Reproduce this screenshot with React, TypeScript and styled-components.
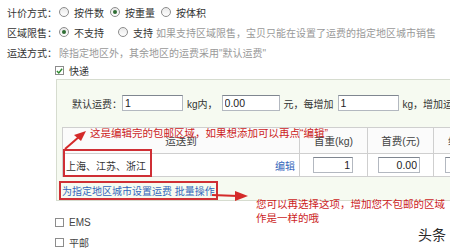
import React from "react";
import styled, { createGlobalStyle } from "styled-components";

const Global = createGlobalStyle`
  html, body { margin: 0; padding: 0; background: #fff; }
  body { overflow: hidden; }
`;

const Page = styled.div`
  position: relative;
  width: 450px;
  height: 251px;
  overflow: hidden;
  background: #fff;
  font-family: "Liberation Sans", "Noto Sans CJK SC", sans-serif;
  font-size: 10px;
  color: #333;
`;

const Form = styled.div`
  padding-top: 2px;
`;

const FormRow = styled.div`
  display: flex;
  align-items: center;
  height: 20px;
  padding-left: 7px;
  white-space: nowrap;
`;

const Label = styled.span`
  color: #333;
  margin-right: 2px;
`;

const Radio = styled.span<{ $checked?: boolean }>`
  position: relative;
  box-sizing: border-box;
  width: 10px;
  height: 10px;
  border-radius: 50%;
  border: 1px solid #8c8c8c;
  background: linear-gradient(#e9e9e9, #fff);
  margin: 0 5px 0 0;
  flex: none;
  &::after {
    content: "";
    display: ${(p) => (p.$checked ? "block" : "none")};
    position: absolute;
    left: 2px;
    top: 2px;
    width: 4px;
    height: 4px;
    border-radius: 50%;
    background: #2f6e34;
  }
`;

const Option = styled.span<{ $gap?: number }>`
  margin-right: ${(p) => p.$gap ?? 6}px;
`;

const Hint = styled.span`
  color: #999;
`;

const CheckRow = styled.div`
  display: flex;
  align-items: center;
  padding-left: 55px;
  height: 17px;
  white-space: nowrap;
`;

const Box = styled.span`
  box-sizing: border-box;
  width: 9px;
  height: 9px;
  border: 1px solid #8c8c8c;
  background: #fff;
  margin-right: 5px;
  display: flex;
  align-items: center;
  justify-content: center;
  flex: none;
`;

const Panel = styled.div`
  box-sizing: border-box;
  margin-left: 56px;
  width: 600px;
  height: 122px;
  border: 1px solid #d6dccf;
  background: #f6faf1;
  padding: 15px 0 0 5px;
`;

const FeeRow = styled.div`
  display: flex;
  align-items: center;
  height: 16px;
  padding-left: 10px;
  white-space: nowrap;
`;

const FeeText = styled.span`
  margin: 0 4px;
`;

const Field = styled.input<{ $w: number; $right?: boolean }>`
  box-sizing: border-box;
  width: ${(p) => p.$w}px;
  height: 16px;
  border: 1px solid #b3b8c0;
  border-top-color: #7f8690;
  background: #fff;
  padding: 0 2px;
  font-family: "Liberation Sans", sans-serif;
  font-size: 10.5px;
  color: #222;
  text-align: ${(p) => (p.$right ? "right" : "left")};
  outline: none;
`;

const Table = styled.table`
  margin-top: 16px;
  border-collapse: collapse;
  table-layout: fixed;
  background: #fff;
`;

const Th = styled.th<{ $w: number }>`
  width: ${(p) => p.$w}px;
  height: 25px;
  padding: 0;
  border: 1px solid #cfcfcf;
  background: #fbfbfb;
  font-weight: normal;
  font-size: 10.5px;
  color: #444;
  text-align: center;
  white-space: nowrap;
`;

const Td = styled.td<{ $pl?: number }>`
  height: 22px;
  padding: 0 0 0 ${(p) => p.$pl ?? 0}px;
  border: 1px solid #cfcfcf;
  white-space: nowrap;
`;

const PlaceCell = styled.div`
  display: flex;
  align-items: center;
  justify-content: space-between;
  padding: 0 4px 0 3px;
`;

const Place = styled.span`
  position: relative;
  font-size: 10px;
  &::after {
    content: "";
    position: absolute;
    left: -3px;
    right: -6px;
    top: -9px;
    bottom: -4px;
    border: 2px solid #cf2f35;
  }
`;

const Blue = styled.span`
  color: #3366bb;
`;

const LinkRow = styled.div`
  display: flex;
  align-items: center;
  height: 20px;
  margin-top: 3px;
`;

const BoxedLink = styled.span`
  box-sizing: border-box;
  display: flex;
  align-items: center;
  height: 19px;
  margin-left: -3px;
  padding: 0 1px;
  border: 2px solid #cf2f35;
  color: #3366bb;
  white-space: nowrap;
`;

const Options = styled.div`
  margin-top: 11px;
`;

const OptRow = styled.div`
  display: flex;
  align-items: center;
  padding-left: 55px;
  height: 20px;
  color: #444;
`;

const Note = styled.div<{ $x: number; $y: number }>`
  position: absolute;
  left: ${(p) => p.$x}px;
  top: ${(p) => p.$y}px;
  color: #cc1d1d;
  font-size: 10.5px;
  line-height: 14px;
  white-space: nowrap;
`;

const Arrow = styled.svg<{ $x: number; $y: number }>`
  position: absolute;
  left: ${(p) => p.$x}px;
  top: ${(p) => p.$y}px;
`;

const Mark = styled.div`
  position: absolute;
  right: 4px;
  bottom: 7px;
  font-family: "Noto Sans CJK SC", sans-serif;
  font-size: 14px;
  color: #2a2a2a;
`;

const Check = () => (
  <svg width="8" height="8" viewBox="0 0 8 8">
    <path d="M1 4 L3.2 6.2 L7 1.5" fill="none" stroke="#2e8a2e" strokeWidth="1.6" />
  </svg>
);

export default function App() {
  return (
    <Page>
      <Global />
      <Form>
        <FormRow>
          <Label>计价方式：</Label>
          <Radio />
          <Option>按件数</Option>
          <Radio $checked />
          <Option>按重量</Option>
          <Radio />
          <Option>按体积</Option>
        </FormRow>
        <FormRow>
          <Label>区域限售：</Label>
          <Radio $checked />
          <Option $gap={14}>不支持</Option>
          <Radio />
          <Option $gap={3}>支持</Option>
          <Hint>如果支持区域限售，宝贝只能在设置了运费的指定地区城市销售</Hint>
        </FormRow>
        <FormRow>
          <Label>运送方式：</Label>
          <Hint>除指定地区外，其余地区的运费采用"默认运费"</Hint>
        </FormRow>
      </Form>
      <CheckRow>
        <Box>
          <Check />
        </Box>
        <span>快递</span>
      </CheckRow>
      <Panel>
        <FeeRow>
          <span>默认运费：</span>
          <Field $w={61} defaultValue="1" />
          <FeeText>kg内，</FeeText>
          <Field $w={58} defaultValue="0.00" />
          <FeeText>元，每增加</FeeText>
          <Field $w={61} defaultValue="1" />
          <FeeText>kg，增加运费：</FeeText>
          <Field $w={58} defaultValue="0.00" />
        </FeeRow>
        <Table>
          <thead>
            <tr>
              <Th $w={236}>运送到</Th>
              <Th $w={67}>首重(kg)</Th>
              <Th $w={65}>首费(元)</Th>
              <Th $w={67}>续重(kg)</Th>
              <Th $w={67}>续费(元)</Th>
            </tr>
          </thead>
          <tbody>
            <tr>
              <Td>
                <PlaceCell>
                  <Place>上海、江苏、浙江</Place>
                  <Blue>编辑</Blue>
                </PlaceCell>
              </Td>
              <Td $pl={13}>
                <Field $w={40} $right defaultValue="1" />
              </Td>
              <Td $pl={10}>
                <Field $w={42} $right defaultValue="0.00" />
              </Td>
              <Td $pl={11}>
                <Field $w={40} $right defaultValue="1" />
              </Td>
              <Td $pl={11}>
                <Field $w={40} $right defaultValue="0.00" />
              </Td>
            </tr>
          </tbody>
        </Table>
        <LinkRow>
          <BoxedLink>为指定地区城市设置运费 批量操作</BoxedLink>
        </LinkRow>
      </Panel>
      <Options>
        <OptRow>
          <Box />
          <span>EMS</span>
        </OptRow>
        <OptRow>
          <Box />
          <span>平邮</span>
        </OptRow>
      </Options>

      <Note $x={90} $y={126}>这是编辑完的包邮区域，如果想添加可以再点“编辑”</Note>
      <Arrow $x={60} $y={127} width="30" height="26" viewBox="0 0 30 26">
        <line x1="5" y1="22" x2="20" y2="9" stroke="#d42a2a" strokeWidth="2" />
        <polygon points="26,4 14,8 21,14" fill="#d42a2a" />
      </Arrow>
      <Arrow $x={212} $y={189} width="40" height="14" viewBox="0 0 40 14">
        <line x1="0" y1="6" x2="26" y2="7" stroke="#d42a2a" strokeWidth="2" />
        <polygon points="23,2 36,7 23,12" fill="#d42a2a" />
      </Arrow>
      <Note $x={256} $y={197}>
        您可以再选择这项，增加您不包邮的区域
        <br />
        作是一样的哦
      </Note>
      <Mark>头条</Mark>
    </Page>
  );
}
